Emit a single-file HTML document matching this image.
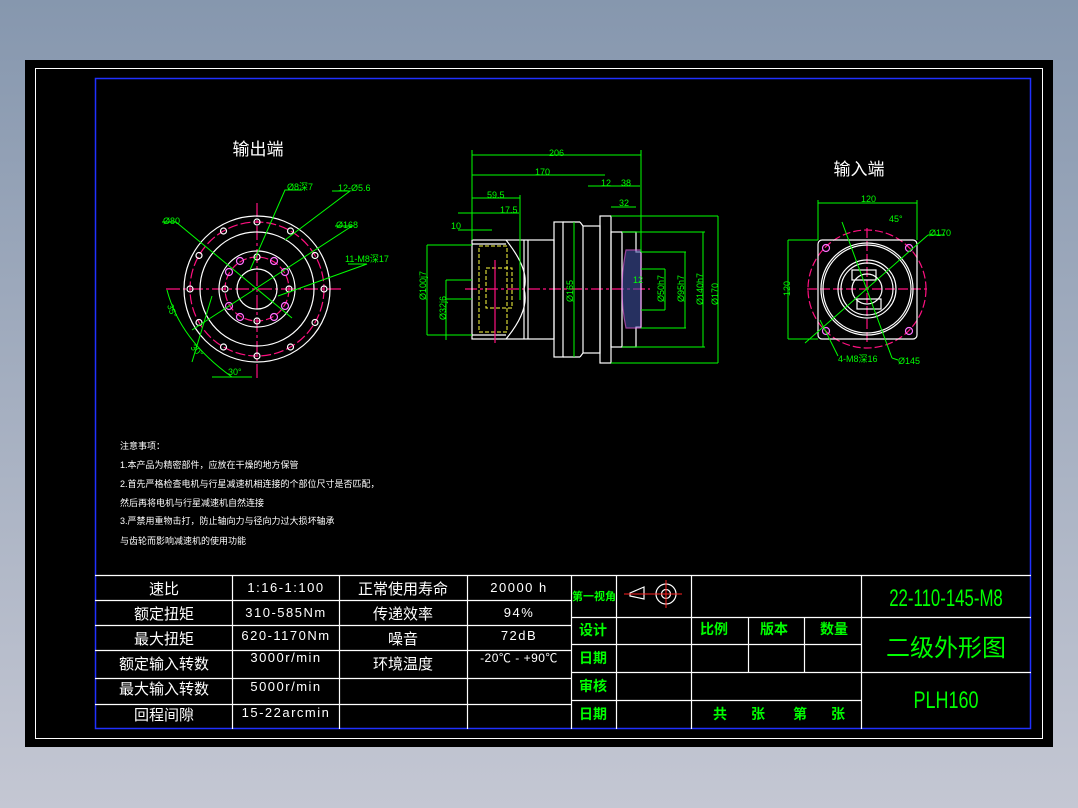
<!DOCTYPE html>
<html><head><meta charset="utf-8"><style>
html,body{margin:0;padding:0;width:1078px;height:808px;overflow:hidden;background:linear-gradient(#8697ae,#c4c7d3);}
svg{display:block}
text{font-family:"Liberation Sans","Noto Sans CJK SC",sans-serif;}
</style></head><body>
<svg width="1078" height="808" viewBox="0 0 1078 808" xmlns="http://www.w3.org/2000/svg">
<rect x="25" y="60" width="1028" height="687" fill="#000"/>
<rect x="35.5" y="68.5" width="1007" height="670" fill="none" stroke="#fff" stroke-width="1"/>
<rect x="95.5" y="78.5" width="935" height="650" fill="none" stroke="#2030ff" stroke-width="1.5"/>

<!-- titles -->
<text x="258" y="155" fill="#fff" font-size="17" text-anchor="middle">输出端</text>
<text x="859" y="175" fill="#fff" font-size="17" text-anchor="middle">输入端</text>

<!-- LEFT flange -->
<g fill="none" stroke-width="1.2">
<line x1="166" y1="289" x2="342" y2="289" stroke="#ff1080" stroke-dasharray="14,3,3,3"/>
<line x1="257" y1="203" x2="257" y2="380" stroke="#ff1080" stroke-dasharray="14,3,3,3"/>
<circle cx="257" cy="289" r="73" stroke="#fff"/>
<circle cx="257" cy="289" r="57" stroke="#fff"/>
<circle cx="257" cy="289" r="38" stroke="#fff"/>
<circle cx="257" cy="289" r="20" stroke="#fff"/>
<circle cx="257" cy="289" r="67" stroke="#ff1080" stroke-dasharray="10,3"/>
<circle cx="257" cy="289" r="32" stroke="#ff1080" stroke-dasharray="8,3"/>
<g stroke="#fff">
<circle cx="257" cy="222" r="3"/><circle cx="290.5" cy="231" r="3"/><circle cx="315" cy="255.5" r="3"/><circle cx="324" cy="289" r="3"/><circle cx="315" cy="322.5" r="3"/><circle cx="290.5" cy="347" r="3"/><circle cx="257" cy="356" r="3"/><circle cx="223.5" cy="347" r="3"/><circle cx="199" cy="322.5" r="3"/><circle cx="190" cy="289" r="3"/><circle cx="199" cy="255.5" r="3"/><circle cx="223.5" cy="231" r="3"/>
<circle cx="257" cy="257" r="3"/><circle cx="257" cy="321" r="3"/><circle cx="225" cy="289" r="3"/><circle cx="289" cy="289" r="3"/>
</g>
<g stroke="#ff70ff">
<circle cx="240" cy="261" r="3.5"/><circle cx="274" cy="261" r="3.5"/><circle cx="285" cy="272" r="3.5"/><circle cx="285" cy="306" r="3.5"/><circle cx="274" cy="317" r="3.5"/><circle cx="240" cy="317" r="3.5"/><circle cx="229" cy="306" r="3.5"/><circle cx="229" cy="272" r="3.5"/>
</g>
<g stroke="#00ff00" stroke-width="1">
<polyline points="162,222 176,222 292,318"/>
<polyline points="302,190 285,190 250,270"/>
<polyline points="332,191 350,191 285,240"/>
<polyline points="335,226 352,226 192,330"/>
<polyline points="348,264 367,264 278,296"/>
<path d="M167,290 Q180,340 232,377"/>
<line x1="212" y1="377" x2="252" y2="377"/>
<line x1="192" y1="362" x2="212" y2="296"/>
</g>
</g>
<g fill="#00ff00" font-size="9" font-family="Liberation Sans Narrow, Liberation Sans, sans-serif">
<text x="163" y="224">Ø80</text><text x="287" y="190">Ø8深7</text><text x="338" y="191">12-Ø5.6</text>
<text x="336" y="228">Ø168</text><text x="345" y="262">11-M8深17</text>
<text x="168" y="316" transform="rotate(70 175 310)">35°</text>
<text x="190" y="352" transform="rotate(45 195 350)">30°</text>
<text x="228" y="375">30°</text>
</g>

<!-- MIDDLE side view -->
<g fill="none" stroke-width="1.2">
<line x1="465" y1="289" x2="650" y2="289" stroke="#ff1080" stroke-dasharray="12,3,3,3"/>
<g stroke="#fff">
<rect x="472" y="240" width="82" height="99"/>
<line x1="472" y1="244" x2="506" y2="244"/><line x1="472" y1="335" x2="506" y2="335"/>
<path d="M506,240 Q530,270 524,289 Q530,310 506,339"/>
<line x1="524" y1="240" x2="524" y2="339"/><line x1="528" y1="240" x2="528" y2="339"/>
<rect x="554" y="222" width="9" height="135"/>
<line x1="563" y1="222" x2="580" y2="222"/><line x1="563" y1="357" x2="580" y2="357"/>
<line x1="580" y1="222" x2="583" y2="226"/><line x1="580" y1="357" x2="583" y2="353"/>
<rect x="583" y="226" width="17" height="127"/>
<rect x="600" y="216" width="11" height="147"/>
<rect x="611" y="232" width="11" height="115"/>
<polyline points="622,232 636,232 636,252 641,252 641,327 636,327 636,347 622,347"/>
</g>
<path d="M626,250 L641,250 L641,328 L626,328 Q618,290 626,250Z" fill="#4050a0" opacity=".6" stroke="#ff70ff"/>
<g stroke="#ffff40" stroke-dasharray="4,2" stroke-width="1">
<rect x="479" y="246" width="28" height="86"/><rect x="486" y="268" width="26" height="40"/>
</g>
<line x1="495" y1="260" x2="495" y2="343" stroke="#ff1080"/>
<g stroke="#00ff00" stroke-width="1">
<line x1="472" y1="155" x2="641" y2="155"/><line x1="472" y1="175" x2="605" y2="175"/>
<line x1="472" y1="198" x2="520" y2="198"/><line x1="458" y1="213" x2="519" y2="213"/><line x1="458" y1="230" x2="492" y2="230"/>
<line x1="588" y1="186" x2="640" y2="186"/><line x1="611" y1="207" x2="636" y2="207"/>
<line x1="472" y1="150" x2="472" y2="240"/><line x1="641" y1="150" x2="641" y2="252"/><line x1="520" y1="195" x2="520" y2="300"/>
<line x1="427" y1="245" x2="472" y2="245"/><line x1="427" y1="335" x2="472" y2="335"/><line x1="427" y1="245" x2="427" y2="335"/>
<line x1="446" y1="280" x2="472" y2="280"/><line x1="446" y1="299" x2="472" y2="299"/><line x1="446" y1="280" x2="446" y2="340"/>
<line x1="574" y1="222" x2="574" y2="357"/>
<line x1="611" y1="216" x2="718" y2="216"/><line x1="611" y1="363" x2="718" y2="363"/><line x1="718" y1="216" x2="718" y2="363"/>
<line x1="622" y1="232" x2="705" y2="232"/><line x1="622" y1="347" x2="705" y2="347"/><line x1="703" y1="232" x2="703" y2="347"/>
<line x1="641" y1="252" x2="686" y2="252"/><line x1="641" y1="328" x2="686" y2="328"/><line x1="685" y1="252" x2="685" y2="328"/>
<line x1="641" y1="269" x2="665" y2="269"/><line x1="641" y1="310" x2="665" y2="310"/><line x1="665" y1="269" x2="665" y2="310"/>
</g>
</g>
<g fill="#00ff00" font-size="9">
<text x="549" y="156">206</text><text x="535" y="175">170</text><text x="487" y="198">59.5</text><text x="500" y="213">17.5</text><text x="451" y="229">10</text>
<text x="601" y="186">12</text><text x="621" y="186">38</text><text x="619" y="206">32</text><text x="633" y="283">12</text>
<text transform="translate(426,300) rotate(-90)">Ø100j7</text><text transform="translate(446,320) rotate(-90)">Ø32j6</text>
<text transform="translate(573,302) rotate(-90)">Ø165</text><text transform="translate(664,302) rotate(-90)">Ø50h7</text>
<text transform="translate(684,302) rotate(-90)">Ø95h7</text><text transform="translate(703,305) rotate(-90)">Ø140h7</text><text transform="translate(718,305) rotate(-90)">Ø170</text>
</g>

<!-- RIGHT input view -->
<g fill="none" stroke-width="1.2">
<circle cx="867" cy="289" r="59" stroke="#ff1080" stroke-dasharray="8,3"/>
<line x1="807" y1="289" x2="927" y2="289" stroke="#ff1080" stroke-dasharray="10,3"/>
<line x1="867" y1="228" x2="867" y2="344" stroke="#ff1080" stroke-dasharray="10,3"/>
<rect x="818" y="240" width="99" height="99" rx="4" stroke="#fff"/>
<circle cx="867" cy="289" r="46" stroke="#fff"/><circle cx="867" cy="289" r="44" stroke="#fff"/>
<circle cx="867" cy="289" r="29" stroke="#fff"/><circle cx="867" cy="289" r="26" stroke="#fff"/><circle cx="867" cy="289" r="15" stroke="#fff"/>
<g stroke="#ff70ff"><circle cx="826" cy="248" r="3.5"/><circle cx="909" cy="248" r="3.5"/><circle cx="826" cy="331" r="3.5"/><circle cx="909" cy="331" r="3.5"/></g>
<rect x="852" y="270" width="24" height="10" stroke="#fff"/><rect x="857" y="299" width="24" height="10" stroke="#fff"/>
<g stroke="#00ff00" stroke-width="1">
<line x1="818" y1="203" x2="917" y2="203"/><line x1="818" y1="200" x2="818" y2="240"/><line x1="917" y1="200" x2="917" y2="240"/>
<line x1="788" y1="240" x2="818" y2="240"/><line x1="788" y1="339" x2="818" y2="339"/><line x1="788" y1="240" x2="788" y2="339"/>
<line x1="805" y1="343" x2="928" y2="235"/><line x1="928" y1="235" x2="945" y2="235"/>
<line x1="842" y1="222" x2="892" y2="358"/><line x1="892" y1="358" x2="898" y2="360"/>
<line x1="820" y1="320" x2="838" y2="356"/>
</g>
</g>
<g fill="#00ff00" font-size="9">
<text x="861" y="202">120</text><text x="889" y="222">45°</text><text x="929" y="236">Ø170</text>
<text transform="translate(790,296) rotate(-90)">120</text>
<text x="838" y="362">4-M8深16</text><text x="898" y="364">Ø145</text>
</g>

<!-- notes -->
<g fill="#fff" font-size="9">
<text x="120" y="449">注意事项：</text>
<text x="120" y="468">1.本产品为精密部件，应放在干燥的地方保管</text>
<text x="120" y="487">2.首先严格检查电机与行星减速机相连接的个部位尺寸是否匹配，</text>
<text x="120" y="506">然后再将电机与行星减速机自然连接</text>
<text x="120" y="524">3.严禁用重物击打，防止轴向力与径向力过大损坏轴承</text>
<text x="120" y="544">与齿轮而影响减速机的使用功能</text>
</g>

<!-- tables -->
<g stroke="#fff" stroke-width="1.2" fill="none">
<line x1="95" y1="575.5" x2="1031" y2="575.5"/>
<line x1="95" y1="600.5" x2="571" y2="600.5"/><line x1="95" y1="625.5" x2="571" y2="625.5"/><line x1="95" y1="650.5" x2="571" y2="650.5"/><line x1="95" y1="678.5" x2="571" y2="678.5"/><line x1="95" y1="704.5" x2="571" y2="704.5"/>
<line x1="232.5" y1="575" x2="232.5" y2="729"/><line x1="339.5" y1="575" x2="339.5" y2="729"/><line x1="467.5" y1="575" x2="467.5" y2="729"/><line x1="571.5" y1="575" x2="571.5" y2="729"/>
<line x1="571" y1="617.5" x2="1031" y2="617.5"/><line x1="571" y1="644.5" x2="861" y2="644.5"/><line x1="571" y1="672.5" x2="1031" y2="672.5"/><line x1="571" y1="700.5" x2="861" y2="700.5"/>
<line x1="616.5" y1="575" x2="616.5" y2="729"/><line x1="691.5" y1="575" x2="691.5" y2="729"/>
<line x1="748.5" y1="617" x2="748.5" y2="672"/><line x1="804.5" y1="617" x2="804.5" y2="672"/>
<line x1="861.5" y1="575" x2="861.5" y2="729"/>
<!-- projection symbol -->
<polygon points="630,593 644,587 644,599 630,596"/>
<circle cx="666" cy="594" r="10"/><circle cx="666" cy="594" r="4.5"/>
</g>
<g stroke="#ff2020" stroke-width="1"><line x1="624" y1="594" x2="652" y2="594"/><line x1="652" y1="594" x2="682" y2="594"/><line x1="666" y1="580" x2="666" y2="608"/></g>
<g fill="#fff" font-size="15" text-anchor="middle">
<text x="164" y="594">速比</text><text x="164" y="619">额定扭矩</text><text x="164" y="644">最大扭矩</text><text x="164" y="669">额定输入转数</text><text x="164" y="694">最大输入转数</text><text x="164" y="720">回程间隙</text>
<text x="403" y="594">正常使用寿命</text><text x="403" y="619">传递效率</text><text x="403" y="644">噪音</text><text x="403" y="669">环境温度</text>
</g>
<g fill="#fff" font-size="13" text-anchor="middle" letter-spacing="1.5">
<text x="286" y="592">1:16-1:100</text><text x="286" y="617">310-585Nm</text><text x="286" y="640">620-1170Nm</text><text x="286" y="662">3000r/min</text><text x="286" y="691">5000r/min</text><text x="286" y="717">15-22arcmin</text>
<text x="519" y="592">20000 h</text><text x="519" y="617">94%</text><text x="519" y="640">72dB</text><text x="519" y="662" font-size="12" letter-spacing="0.5">-20℃ - +90℃</text>
</g>
<g fill="#00ff00" font-weight="bold" text-anchor="middle">
<text x="594" y="600" font-size="11">第一视角</text>
<text x="593" y="635" font-size="14">设计</text><text x="593" y="663" font-size="14">日期</text><text x="593" y="691" font-size="14">审核</text><text x="593" y="719" font-size="14">日期</text>
<text x="714" y="634" font-size="14">比例</text><text x="774" y="634" font-size="14">版本</text><text x="834" y="634" font-size="14">数量</text>
<text x="720" y="719" font-size="14">共</text><text x="758" y="719" font-size="14">张</text><text x="800" y="719" font-size="14">第</text><text x="838" y="719" font-size="14">张</text>
</g>
<g fill="#00ff00" text-anchor="middle" font-family="Liberation Serif,serif">
<text x="946" y="606" font-size="24" transform="translate(946,0) scale(0.7,1) translate(-946,0)">22-110-145-M8</text>
<text x="946" y="656" font-size="24" font-family="Liberation Sans,Noto Sans CJK SC,sans-serif">二级外形图</text>
<text x="946" y="708" font-size="24" transform="translate(946,0) scale(0.75,1) translate(-946,0)">PLH160</text>
</g>
</svg>
</body></html>
